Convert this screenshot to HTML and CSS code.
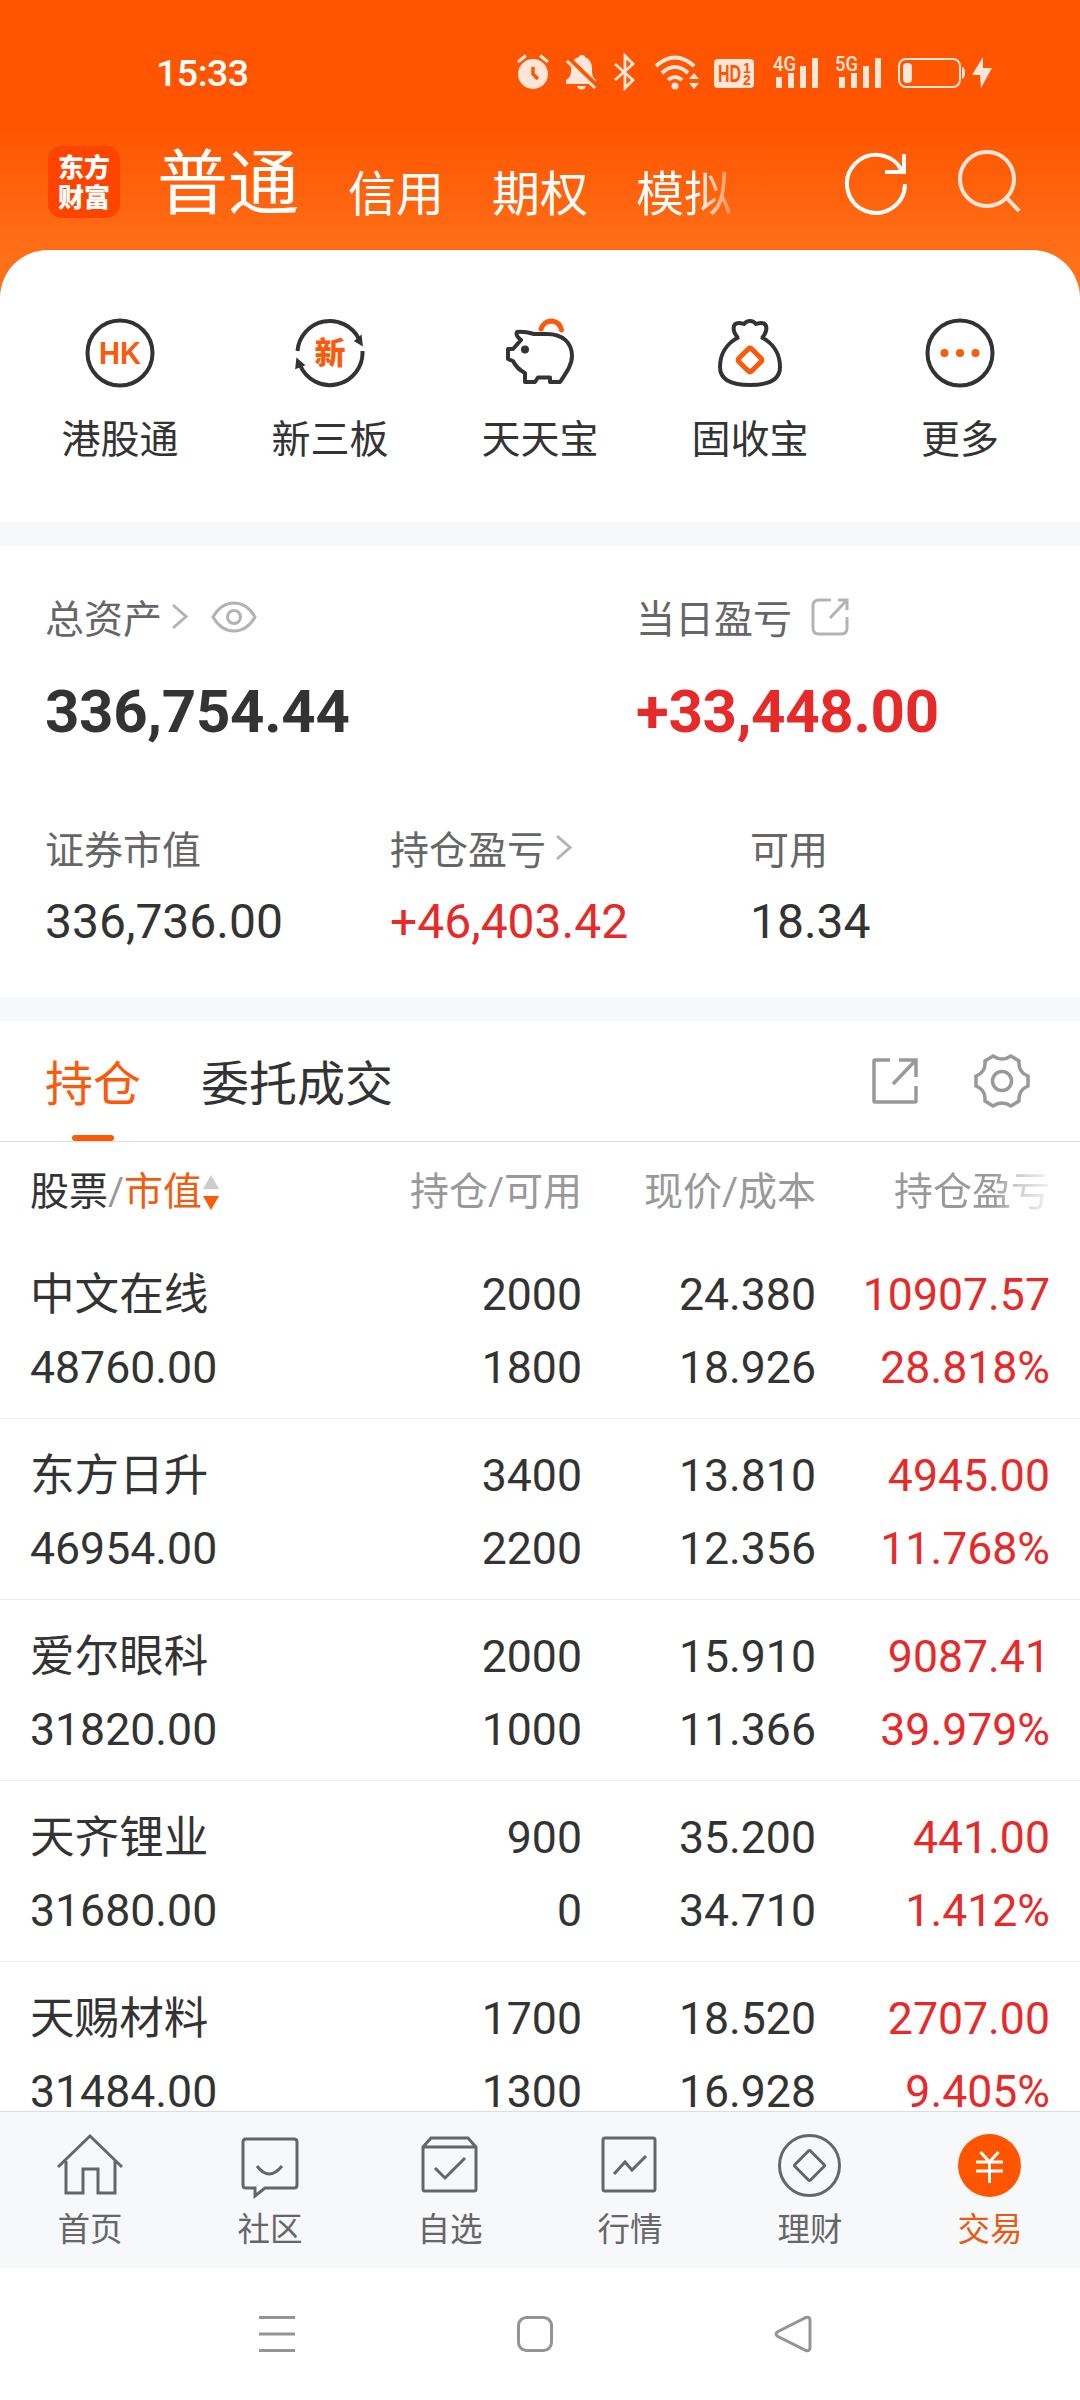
FILE: index.html
```html
<!DOCTYPE html>
<html lang="zh-CN">
<head>
  <meta charset="UTF-8">
  <meta name="viewport" content="width=device-width, initial-scale=1.0">
  <title>东方财富 - 交易</title>
  <link rel="stylesheet" href="styles.css">
</head>
<body>
  <div class="phone">

    <header class="header">
      <div class="status-bar">
        <span class="time">15:33</span>
        <svg class="status-icons" width="480" height="40" viewBox="0 0 480 40" fill="#ffe6d9">
          <!-- alarm -->
          <path d="M2 11l8-6.500M32 11l-8-6.500" stroke="#ffe6d9" stroke-width="3" fill="none"/>
          <circle cx="17" cy="23" r="15"/>
          <path d="M17 16v7l5 5" stroke="#ff5500" stroke-width="3.500" fill="none"/>
          <!-- muted bell -->
          <path d="M50 33v-4q5-3 5-8v-4q0-9 8-11 0-2 3-2t3 2q7 3 7 11v4q0 5 4 8v4z"/>
          <path d="M61 35h9q-1 3.500-4.500 3.500T61 35z"/>
          <path d="M50 5l34 33" stroke="#ff5500" stroke-width="5" fill="none"/>
          <path d="M51 10l28 27" stroke="#ffe6d9" stroke-width="3" fill="none"/>
          <!-- bluetooth -->
          <path d="M99 13l18 16-8 8V5l8 8-18 16" stroke="#ffe6d9" stroke-width="2.800" fill="none"/>
          <!-- wifi -->
          <path d="M140 15q19-17 38 0M146 22q13-12 26 0M152 29q7-6 14 0" stroke="#ffe6d9" stroke-width="4" fill="none"/>
          <circle cx="159" cy="35" r="3.500"/>
          <path d="M173 28l5-6 5 6zM173 32l5 6 5-6z"/>
          <!-- hd -->
          <rect x="198" y="8" width="40" height="29" rx="4"/>
          <text x="202" y="31" class="st-hd" textLength="23" lengthAdjust="spacingAndGlyphs">HD</text>
          <text x="227" y="22" class="st-hd-small">1</text>
          <text x="227" y="34" class="st-hd-small">2</text>
          <!-- mobile signals -->
          <text x="257" y="20" class="st-net" textLength="23" lengthAdjust="spacingAndGlyphs">4G</text>
          <path d="M260 26h6v11h-6zM272 22h6v15h-6zM284 15h6v22h-6zM296 7h6v30h-6z"/>
          <text x="319" y="20" class="st-net" textLength="23" lengthAdjust="spacingAndGlyphs">5G</text>
          <path d="M323 26h6v11h-6zM335 22h6v15h-6zM347 15h6v22h-6zM359 7h6v30h-6z"/>
          <!-- battery -->
          <rect x="383" y="8" width="61" height="28" rx="7" fill="none" stroke="#ffe6d9" stroke-width="2"/>
          <rect x="387" y="12" width="9" height="20" rx="4"/>
          <path d="M446 16q3 1 3 6t-3 6z"/>
          <path d="M467 6l-11 18h8l1 13 11-20h-9z"/>
        </svg>
      </div>

      <div class="top-nav">
        <div class="logo">
          <span>东方</span>
          <span>财富</span>
        </div>
        <nav class="account-tabs">
          <span class="current">普通</span>
          <span>信用</span>
          <span>期权</span>
          <span class="fade">模拟</span>
        </nav>
        <svg class="refresh" width="64" height="64" viewBox="0 0 64 64" fill="none" stroke="#fff" stroke-width="4">
          <path d="M61 33A29 29 0 1 1 58 20M60 3v18H41"/>
        </svg>
        <svg class="search" width="66" height="66" viewBox="0 0 66 66" fill="none" stroke="#ffe6d9" stroke-width="4">
          <circle cx="30" cy="30" r="27"/>
          <path d="M49 48l13 14"/>
        </svg>
      </div>
    </header>

    <section class="quick-menu">
      <div class="quick-item">
        <svg width="72" height="72" viewBox="0 0 72 72">
          <circle cx="36" cy="36" r="32.500" fill="none" stroke="#333" stroke-width="4"/>
          <text x="36" y="47" class="hk" textLength="42" lengthAdjust="spacingAndGlyphs">HK</text>
        </svg>
        <span>港股通</span>
      </div>
      <div class="quick-item">
        <svg width="72" height="72" viewBox="0 0 72 72">
          <path d="M3.500 34A32.500 32.500 0 0 1 65 22M68.500 34A32.500 32.500 0 0 1 6 48" fill="none" stroke="#333" stroke-width="4"/>
          <path d="M61 24l6-5 1 9zM2 51l1-9 7 6z" fill="#333" stroke="#333" stroke-width="1.500"/>
          <text x="36" y="47" class="xin">新</text>
        </svg>
        <span>新三板</span>
      </div>
      <div class="quick-item">
        <svg width="72" height="72" viewBox="0 0 72 72" fill="none" stroke="#333" stroke-width="4" stroke-linejoin="round">
          <path d="M37 12q3-8 11-8 8 1 9.500 9" stroke="#f95a0b" stroke-width="5" stroke-linecap="round"/>
          <path d="M17 23q-6-5-4-8 6-1 17 2h13c16 0 25 9 25 22 0 9-6 17-12 26H46v-4.500H34L31 65H21v-9q-8-4-12-12l-5-2V32h5z"/>
          <circle cx="21" cy="32.500" r="4" fill="#333" stroke="none"/>
        </svg>
        <span>天天宝</span>
      </div>
      <div class="quick-item">
        <svg width="72" height="72" viewBox="0 0 72 72" fill="none" stroke="#333" stroke-width="4">
          <path d="M24 21c-6-7-6-15 1-15 3 0 4 1 5 1 3-4 9-4 12 0 1 0 2-1 5-1 7 0 7 8 1 15M25 20C11 27 6 39 6 50c0 13 12 18 30 18s30-5 30-18c0-11-5-23-19-30"/>
          <rect x="27" y="34" width="18" height="18" rx="2" stroke="#f95a0b" stroke-width="5" transform="rotate(45 36 43)"/>
        </svg>
        <span>固收宝</span>
      </div>
      <div class="quick-item">
        <svg width="72" height="72" viewBox="0 0 72 72">
          <circle cx="36" cy="36" r="32.500" fill="none" stroke="#333" stroke-width="4"/>
          <g fill="#f95a0b"><circle cx="20.500" cy="36" r="4"/><circle cx="36" cy="36" r="4"/><circle cx="51.500" cy="36" r="4"/></g>
        </svg>
        <span>更多</span>
      </div>
    </section>

    <section class="assets">
      <div class="assets-main">
        <div class="asset">
          <div class="asset-label">总资产
            <svg class="chevron" width="18" height="28" viewBox="0 0 18 28"><path d="M2 3l13 11.500L2 26"/></svg>
            <svg class="eye" width="46" height="34" viewBox="0 0 46 34"><path d="M2 17Q10 3 23 3t21 14Q36 31 23 31T2 17z"/><circle cx="23" cy="17" r="6.500"/></svg>
          </div>
          <div class="asset-total">336,754.44</div>
        </div>
        <div class="asset">
          <div class="asset-label">当日盈亏
            <svg class="share" width="40" height="40" viewBox="0 0 40 40"><path d="M21 3H9Q3 3 3 9v22q0 6 6 6h22q6 0 6-6V20M28 3h9v10M37 3L20 21"/></svg>
          </div>
          <div class="asset-total red">+33,448.00</div>
        </div>
      </div>
      <div class="assets-sub">
        <div class="asset">
          <div class="asset-label">证券市值</div>
          <div class="asset-value">336,736.00</div>
        </div>
        <div class="asset">
          <div class="asset-label">持仓盈亏
            <svg class="chevron" width="18" height="28" viewBox="0 0 18 28"><path d="M2 3l13 11.500L2 26"/></svg>
          </div>
          <div class="asset-value red">+46,403.42</div>
        </div>
        <div class="asset">
          <div class="asset-label">可用</div>
          <div class="asset-value">18.34</div>
        </div>
      </div>
    </section>

    <section class="positions">
      <div class="tabs">
        <span class="tab active">持仓</span>
        <span class="tab">委托成交</span>
        <svg class="tab-share" width="48" height="48" viewBox="0 0 48 48"><path d="M19 3H4q-1 0-1 1v40q0 1 1 1h40q1 0 1-1V29M28 3h17v17M44 4L22 27"/></svg>
        <svg class="tab-gear" width="56" height="56" viewBox="0 0 56 56">
          <path d="M19 3q9 6 18 0l8 5q-1 11 9 15v10q-10 4-9 15l-8 5q-9-6-18 0l-8-5q1-11-9-15V23q10-4 9-15z"/>
          <circle cx="28" cy="28" r="9.500"/>
        </svg>
      </div>

      <div class="row table-head">
        <div class="col-name"><b>股票</b>/<em>市值</em><svg width="18" height="36" viewBox="0 0 18 36"><path d="M9 1l8 14H1z" fill="#ccc"/><path d="M9 36l8-14H1z" fill="#f95a0b"/></svg></div>
        <div>持仓/可用</div>
        <div>现价/成本</div>
        <div class="col-last">持仓盈亏</div>
      </div>

      <div class="row">
        <div class="col-name">中文在线<br>48760.00</div>
        <div>2000<br>1800</div>
        <div>24.380<br>18.926</div>
        <div class="red">10907.57<br>28.818%</div>
      </div>
      <div class="row">
        <div class="col-name">东方日升<br>46954.00</div>
        <div>3400<br>2200</div>
        <div>13.810<br>12.356</div>
        <div class="red">4945.00<br>11.768%</div>
      </div>
      <div class="row">
        <div class="col-name">爱尔眼科<br>31820.00</div>
        <div>2000<br>1000</div>
        <div>15.910<br>11.366</div>
        <div class="red">9087.41<br>39.979%</div>
      </div>
      <div class="row">
        <div class="col-name">天齐锂业<br>31680.00</div>
        <div>900<br>0</div>
        <div>35.200<br>34.710</div>
        <div class="red">441.00<br>1.412%</div>
      </div>
      <div class="row">
        <div class="col-name">天赐材料<br>31484.00</div>
        <div>1700<br>1300</div>
        <div>18.520<br>16.928</div>
        <div class="red">2707.00<br>9.405%</div>
      </div>
    </section>

    <nav class="tab-bar">
      <div class="bar-item">
        <svg width="68" height="68" viewBox="0 0 68 68"><path d="M2 35L34 4l32 31M10 29v32h17V37h15v24h17V29"/></svg>
        <span>首页</span>
      </div>
      <div class="bar-item">
        <svg width="68" height="68" viewBox="0 0 68 68"><path d="M8 7h50q3 0 3 3v43q0 3-3 3H29l-10 8v-8H10q-3 0-3-3V10q0-3 3-3M21 34q12 16 25 0"/></svg>
        <span>社区</span>
      </div>
      <div class="bar-item">
        <svg width="68" height="68" viewBox="0 0 68 68"><path d="M7 15l8-9h37l8 9v42q0 2-2 2H9q-2 0-2-2zM7 15h53M19 36l10 10 20-20"/></svg>
        <span>自选</span>
      </div>
      <div class="bar-item">
        <svg width="68" height="68" viewBox="0 0 68 68"><rect x="7" y="6" width="52" height="53" rx="2"/><path d="M18 42l11-12 7 8 14-14"/></svg>
        <span>行情</span>
      </div>
      <div class="bar-item">
        <svg width="68" height="68" viewBox="0 0 68 68"><circle cx="33.500" cy="33.500" r="30"/><rect x="22.500" y="22.500" width="22" height="22" rx="1.500" transform="rotate(45 33.500 33.500)"/></svg>
        <span>理财</span>
      </div>
      <div class="bar-item active">
        <svg width="68" height="68" viewBox="0 0 68 68"><circle cx="33.500" cy="33.500" r="31.500" class="coin"/><path class="yen" d="M24.500 20l9 10 9-10M20 30h27M20 39h27M33.500 30v21"/></svg>
        <span>交易</span>
      </div>
    </nav>

    <div class="system-nav">
      <svg width="40" height="40" viewBox="0 0 40 40"><path d="M2 3.500h36M2 20h36M2 36.500h36"/></svg>
      <svg width="40" height="40" viewBox="0 0 40 40"><rect x="3.500" y="3.500" width="33" height="33" rx="8"/></svg>
      <svg width="40" height="40" viewBox="0 0 40 40"><path d="M5 17.500L33 3.500q4-1 4 3v27q0 4-4 3L5 22.500q-4-2.500 0-5z"/></svg>
    </div>

  </div>
</body>
</html>
```
FILE: styles.css
```css
* {
  margin: 0;
  padding: 0;
  box-sizing: border-box;
}

body {
  font-family: Roboto, "Noto Sans CJK SC", sans-serif;
  background-color: #fff;
  color: #333;
}

svg {
  display: block;
  flex: none;
}

.phone {
  width: 1080px;
  height: 2400px;
  display: flex;
  flex-direction: column;
  overflow: hidden;
}

.red {
  color: #e62a2a;
}

/* header */
.header {
  height: 300px;
  flex: none;
  background: linear-gradient(#ff5500 0, #ff5500 125px, #ff7019 260px);
}

.status-bar {
  height: 126px;
  padding: 20px 84px 0 156px;
  display: flex;
  align-items: center;
  justify-content: space-between;
}

.time {
  font-size: 37.5px;
  font-weight: 500;
  letter-spacing: -0.5px;
  color: #fff;
}

.status-icons {
  margin-top: -4px;
}

.st-hd {
  font: bold 23px "Liberation Sans", sans-serif;
  fill: #ff5500;
}

.st-hd-small {
  font: bold 14px "Liberation Sans", sans-serif;
  fill: #ff5500;
}

.st-net {
  font: 500 21px Roboto, sans-serif;
}

.top-nav {
  height: 124px;
  padding-left: 48px;
  display: flex;
  align-items: center;
  color: #fff;
}

.logo {
  width: 72px;
  height: 72px;
  display: flex;
  flex-direction: column;
  align-items: center;
  justify-content: center;
  padding-bottom: 2px;
  border-radius: 14px;
  background: #ff4400;
  font: 900 26px/30px "Noto Sans CJK SC", sans-serif;
  margin-top: -12px;
}

.account-tabs {
  display: flex;
  align-items: baseline;
  gap: 48px;
  margin-left: 37px;
  padding-top: 5px;
  font-size: 48px;
  line-height: 100px;
}

.account-tabs .current {
  font-size: 71px;
  margin-right: 1px;
  transform: translateY(-3px);
}

.fade {
  background: linear-gradient(90deg, #fff 62%, rgba(255, 255, 255, 0.3) 100%);
  -webkit-background-clip: text;
  background-clip: text;
  color: transparent;
}

.refresh {
  margin: -10px 0 0 auto;
}

.search {
  margin: -12px 57px 0 49px;
}

/* quick menu */
.quick-menu {
  height: 272px;
  flex: none;
  margin-top: -50px;
  padding: 67px 15px 0;
  display: flex;
  border-radius: 48px 48px 0 0;
  background: #fff;
}

.quick-item {
  flex: 1;
  display: flex;
  flex-direction: column;
  align-items: center;
  font-size: 39px;
  line-height: 48px;
  gap: 27px;
}

.hk {
  font: bold 31px "Liberation Sans", sans-serif;
  fill: #f95a0b;
  text-anchor: middle;
}

.xin {
  font: 900 31px "Noto Sans CJK SC", sans-serif;
  fill: #f95a0b;
  text-anchor: middle;
}

/* assets */
.assets {
  height: 499px;
  flex: none;
  border-top: 24px solid #f7f8fa;
  border-bottom: 24px solid #f7f8fa;
  padding-top: 46px;
}

.assets-main {
  display: grid;
  grid-template-columns: 591px 1fr;
  padding-left: 45px;
  height: 231px;
}

.assets-sub {
  display: grid;
  grid-template-columns: 345px 360px 1fr;
  padding-left: 45px;
}

.asset-label {
  display: flex;
  align-items: center;
  height: 48px;
  font-size: 39px;
  color: #666;
}

.asset-total {
  font-size: 60px;
  font-weight: bold;
  letter-spacing: -0.3px;
  line-height: 70px;
  margin-top: 37px;
}

.asset-value {
  font-size: 48px;
  line-height: 56px;
  margin-top: 23px;
}

.chevron,
.eye,
.share {
  fill: none;
  stroke: #b3b3b3;
  stroke-width: 3;
}

.chevron {
  margin-left: 9px;
}

.eye {
  margin: 2px 0 0 22px;
}

.share {
  margin: 2px 0 0 18px;
}

/* positions */
.positions {
  flex: 1;
  min-height: 0;
  overflow: hidden;
}

.tabs {
  height: 121px;
  padding: 0 50px 2px 45px;
  display: flex;
  align-items: center;
  border-bottom: 1px solid #ddd;
  font-size: 48px;
}

.tab {
  position: relative;
  margin-right: 60px;
}

.tab.active {
  color: #f95a0b;
}

.tab.active::after {
  content: "";
  position: absolute;
  left: 27px;
  bottom: -26px;
  width: 42px;
  height: 6px;
  border-radius: 3px;
  background: #f95a0b;
}

.tab-share,
.tab-gear {
  fill: none;
  stroke: #999;
  stroke-width: 3.5;
}

.tab-share {
  margin: 2px 0 0 auto;
}

.tab-gear {
  margin: 2px 0 0 55px;
}

.row {
  display: grid;
  grid-template-columns: 300px 252px 234px 234px;
  height: 181px;
  padding: 21px 30px 0;
  border-bottom: 1px solid #eee;
  font-size: 44.6px;
  line-height: 73px;
  text-align: right;
}

.row .col-name {
  text-align: left;
}

.table-head {
  height: 96px;
  padding-top: 14px;
  border-bottom: none;
  font-size: 39px;
  color: #999;
}

.table-head .col-name {
  display: flex;
  align-items: center;
  height: 72px;
}

.table-head b {
  color: #333;
  font-weight: normal;
}

.table-head em {
  color: #ee5d10;
  font-style: normal;
}

.col-last {
  background: linear-gradient(90deg, #999 76%, #ccc 86%, #f2f2f2 100%);
  -webkit-background-clip: text;
  background-clip: text;
  color: transparent;
}

/* bottom bar */
.tab-bar {
  height: 157px;
  flex: none;
  display: flex;
  border-top: 1px solid #ddd;
  background: #f7f8fa;
}

.bar-item {
  flex: 1;
  display: flex;
  flex-direction: column;
  align-items: center;
  padding-top: 20px;
  font-size: 32.5px;
  line-height: 40px;
  gap: 10px;
  color: #666;
}

.bar-item svg {
  fill: none;
  stroke: #666;
  stroke-width: 3;
}

.bar-item.active {
  color: #e65c12;
}

.bar-item .coin {
  fill: #ff5500;
  stroke: none;
}

.bar-item .yen {
  stroke: #fff;
}

.system-nav {
  height: 132px;
  flex: none;
  display: flex;
  align-items: center;
  gap: 218px;
  padding-left: 257px;
}

.system-nav svg {
  fill: none;
  stroke: #949494;
  stroke-width: 3;
}
```
